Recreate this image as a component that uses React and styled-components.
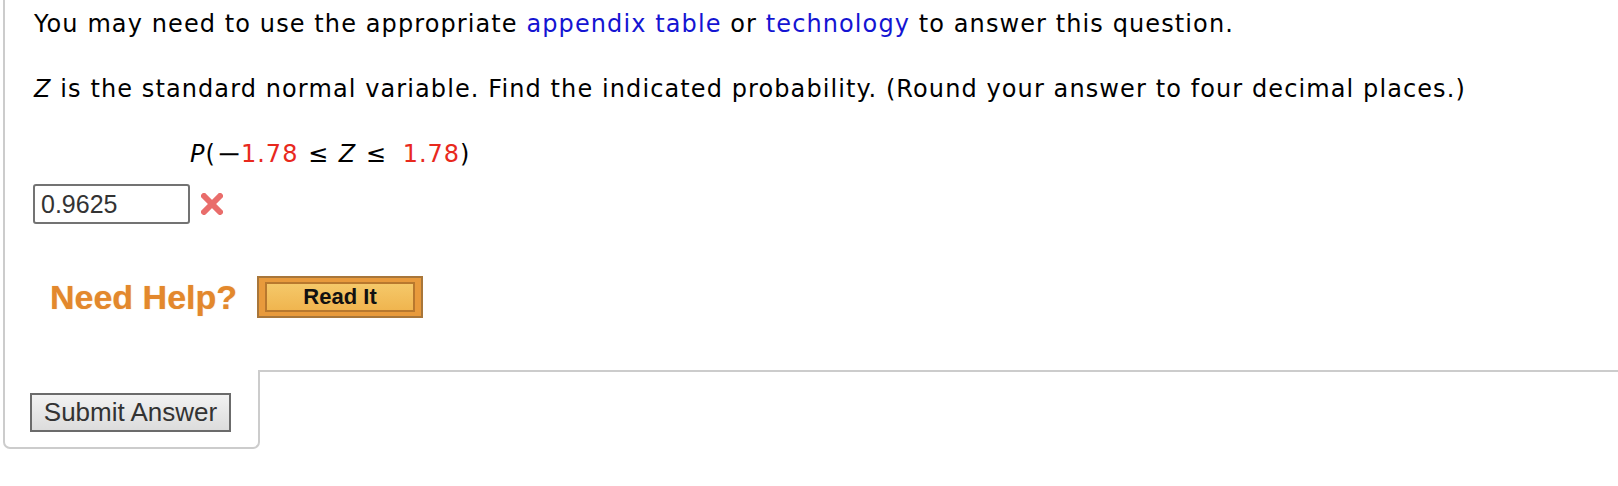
import React from "react";
import styled, { createGlobalStyle } from "styled-components";

const GlobalStyle = createGlobalStyle`
  body {
    margin: 0;
    background: #fff;
    font-family: "DejaVu Sans", Verdana, sans-serif;
  }
`;

const Page = styled.div`
  width: 1618px;
  height: 486px;
  padding-left: 3px;
  box-sizing: border-box;
`;

const Question = styled.div`
  border-left: 2px solid #cccccc;
  padding: 9px 0 0 29px;
  height: 370px;
  box-sizing: border-box;
`;

const Para = styled.p`
  margin: 0 0 35px;
  font-size: 24px;
  line-height: 30px;
  letter-spacing: 1.1px;
  color: #000;
`;

const Link = styled.a`
  color: #1414d2;
  text-decoration: none;
`;

const Var = styled.i`
  font-style: italic;
`;

const MathLine = styled.div`
  padding-left: 156px;
  font-size: 24px;
  line-height: 30px;
  letter-spacing: 1px;
  word-spacing: 1px;
  color: #000;
`;

// the minus sign in the reference is a long bar
const Minus = styled.span`
  display: inline-block;
  margin: 0 1px 0 3px;
  transform: scaleX(1.25);
`;

const Num = styled.span`
  color: #e8291d;
  margin-left: ${(p) => p.$pad || 0}px;
`;

const AnswerRow = styled.div`
  display: flex;
  align-items: center;
  gap: 8px;
  margin-top: 15px;
  margin-left: -1px;
`;

const AnswerBox = styled.div`
  width: 157px;
  height: 40px;
  box-sizing: border-box;
  border: 2px solid #737373;
  border-radius: 3px;
  padding: 0 6px;
  display: flex;
  align-items: center;
  font-family: "Liberation Sans", Arial, sans-serif;
  font-size: 25px;
  color: #333;
`;

const HelpRow = styled.div`
  display: flex;
  align-items: center;
  gap: 20px;
  margin-top: 52px;
  padding-left: 16px;
`;

const HelpLabel = styled.span`
  font-family: "Liberation Sans", Arial, sans-serif;
  font-weight: bold;
  font-size: 34px;
  color: #e3882c;
  text-shadow: 0 0 1px rgba(227, 136, 44, 0.6);
`;

const ReadIt = styled.button`
  width: 166px;
  height: 42px;
  box-sizing: border-box;
  border: 2px solid #a8763a;
  background: #e89a3c;
  padding: 4px 6px;
  display: flex;
  cursor: pointer;

  span {
    flex: 1;
    border: 2px solid #b8782e;
    background: linear-gradient(#f5c869, #f0b54f);
    display: flex;
    align-items: center;
    justify-content: center;
    font-family: "Liberation Sans", Arial, sans-serif;
    font-weight: bold;
    font-size: 22px;
    color: #111;
  }
`;

const Footer = styled.div`
  display: flex;
`;

const SubmitTab = styled.div`
  width: 257px;
  height: 79px;
  box-sizing: border-box;
  border: 2px solid #cccccc;
  border-top: none;
  border-radius: 0 0 7px 7px;
  padding: 23px 0 0 25px;
`;

const Rest = styled.div`
  flex: 1;
  border-top: 2px solid #cccccc;
  margin-left: -2px;
`;

const SubmitButton = styled.button`
  width: 201px;
  height: 39px;
  box-sizing: border-box;
  border: 2px solid #6b6b6b;
  background: linear-gradient(#f2f2f2, #dcdcdc);
  font-family: "Liberation Sans", Arial, sans-serif;
  font-size: 26px;
  color: #333;
  padding: 0;
  cursor: pointer;
`;

const WrongMark = () => (
  <svg width="28" height="28" viewBox="0 0 28 28">
    <g stroke="#e8615f" strokeWidth="6" strokeLinecap="round" opacity="0.92">
      <line x1="6" y1="6" x2="22" y2="22" />
      <line x1="22" y1="6" x2="6" y2="22" />
    </g>
  </svg>
);

export default function App() {
  return (
    <>
      <GlobalStyle />
      <Page>
        <Question>
          <Para>
            You may need to use the appropriate <Link>appendix table</Link> or{" "}
            <Link>technology</Link> to answer this question.
          </Para>
          <Para>
            <Var>Z</Var> is the standard normal variable. Find the indicated
            probability. (Round your answer to four decimal places.)
          </Para>
          <MathLine>
            <Var>P</Var>(<Minus>−</Minus><Num>1.78</Num> ≤ <Var>Z</Var> ≤{" "}
            <Num $pad={6}>1.78</Num>)
          </MathLine>
          <AnswerRow>
            <AnswerBox>0.9625</AnswerBox>
            <WrongMark />
          </AnswerRow>
          <HelpRow>
            <HelpLabel>Need Help?</HelpLabel>
            <ReadIt>
              <span>Read It</span>
            </ReadIt>
          </HelpRow>
        </Question>
        <Footer>
          <SubmitTab>
            <SubmitButton>Submit Answer</SubmitButton>
          </SubmitTab>
          <Rest />
        </Footer>
      </Page>
    </>
  );
}
